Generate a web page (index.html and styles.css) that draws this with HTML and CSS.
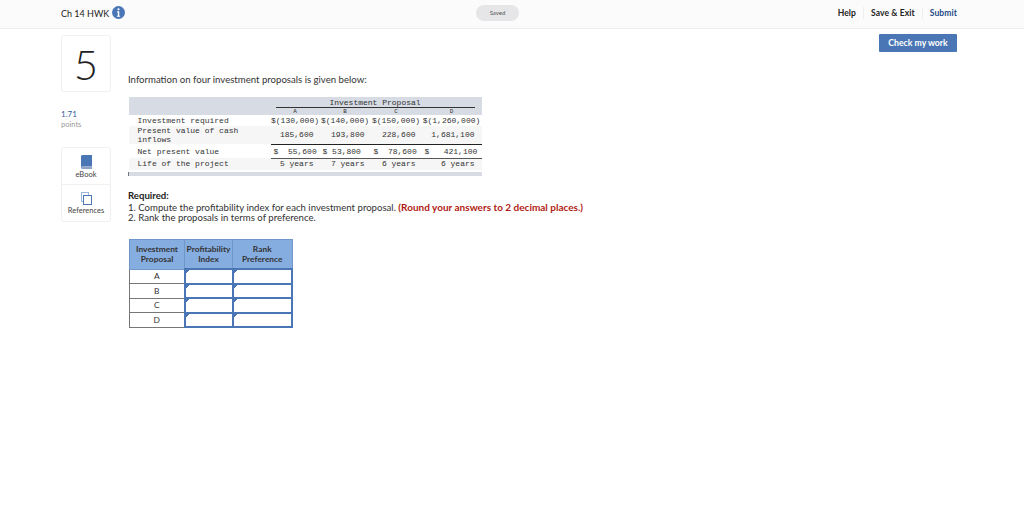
FILE: index.html
```html
<!DOCTYPE html>
<html lang="en">
<head>
    <meta charset="UTF-8">
    <title>Ch 14 HWK</title>
    <link rel="stylesheet" href="styles.css">
</head>
<body>
    <header class="topbar">
        <div class="topbar-left">
            <span class="hw-title">Ch 14 HWK</span>
            <svg class="info-icon" viewBox="0 0 12 12" width="13" height="13">
                <circle cx="6" cy="6" r="6" fill="#4a76b5"/>
                <circle cx="6" cy="3" r="1" fill="#fff"/>
                <path d="M4.7 4.9h2v4h.8v1H4.5v-1h.9v-3h-.7z" fill="#fff"/>
            </svg>
        </div>
        <span class="saved-pill">Saved</span>
        <nav class="topbar-links">
            <a class="help-link">Help</a>
            <a class="exit-link">Save &amp; Exit</a>
            <a class="submit-link">Submit</a>
        </nav>
    </header>

    <div class="page">
        <aside class="side">
            <div class="question-num">5</div>
            <div class="points-value">1.71</div>
            <div class="points-label">points</div>
            <div class="tools">
                <div class="tool tool-first">
                    <svg viewBox="0 0 11 14" width="11" height="14">
                        <path d="M0 1.5Q0 0 1.5 0H11V11.5H1.5Q0 11.5 0 13z" fill="#4a76b5"/>
                        <path d="M0 12.5Q0 11.5 1.5 11.5H11V14H1.5Q0 14 0 12.5z" fill="#8fa3c4"/>
                    </svg>
                    <span>eBook</span>
                </div>
                <div class="tool">
                    <svg viewBox="0 0 11 13" width="11" height="13" fill="#fff" stroke="#4a76b5">
                        <rect x="0.5" y="0.5" width="7" height="9" stroke="#9db5d8"/>
                        <rect x="2.5" y="3.5" width="8" height="9"/>
                    </svg>
                    <span>References</span>
                </div>
            </div>
        </aside>

        <main class="content">
            <div class="check-row"><button class="check-btn">Check my work</button></div>
            <p class="intro">Information on four investment proposals is given below:</p>

            <table class="data-table">
                <colgroup>
                    <col class="col-label">
                    <col class="col-a">
                    <col class="col-b">
                    <col class="col-c">
                    <col class="col-d">
                </colgroup>
                <tr class="shade head-row">
                    <td></td>
                    <td colspan="4" class="group-head"><span>Investment Proposal</span></td>
                </tr>
                <tr class="shade letters">
                    <td></td><td>A</td><td>B</td><td>C</td><td>D</td>
                </tr>
                <tr class="required-row">
                    <td>Investment required</td>
                    <td>$(130,000)</td><td>$(140,000)</td><td>$(150,000)</td><td>$(1,260,000)</td>
                </tr>
                <tr class="tint right-nums present-row">
                    <td>Present value of cash<br>inflows</td>
                    <td>185,600</td><td>193,800</td><td>228,600</td><td>1,681,100</td>
                </tr>
                <tr class="net">
                    <td>Net present value</td>
                    <td>$&nbsp;&nbsp;55,600</td><td>$&nbsp;53,800</td><td>$&nbsp;&nbsp;78,600</td><td>$&nbsp;&nbsp;&nbsp;421,100</td>
                </tr>
                <tr class="tint right-nums life">
                    <td>Life of the project</td>
                    <td>5 years</td><td>7 years</td><td>6 years</td><td>6 years</td>
                </tr>
                <tr class="gap"><td colspan="5"></td></tr>
                <tr class="shade foot"><td colspan="5"></td></tr>
            </table>

            <div class="required">
                <strong>Required:</strong><br>
                1. Compute the profitability index for each investment proposal. <b class="round-note">(Round your answers to 2 decimal places.)</b><br>
                2. Rank the proposals in terms of preference.
            </div>

            <table class="answer-table">
                <tr>
                    <th>Investment<br>Proposal</th>
                    <th>Profitability<br>Index</th>
                    <th>Rank<br>Preference</th>
                </tr>
                <tr><td>A</td><td class="cell-input"></td><td class="cell-input"></td></tr>
                <tr><td>B</td><td class="cell-input"></td><td class="cell-input"></td></tr>
                <tr><td>C</td><td class="cell-input"></td><td class="cell-input"></td></tr>
                <tr><td>D</td><td class="cell-input"></td><td class="cell-input"></td></tr>
            </table>
        </main>
    </div>
</body>
</html>
```

FILE: styles.css
```css
* {
    margin: 0;
    padding: 0;
    box-sizing: border-box;
}

body {
    font-family: 'Lato', 'Open Sans', sans-serif;
    background: #fff;
    color: #222;
    font-size: 10px;
}

.topbar {
    height: 29px;
    background: #fbfbfb;
    border-bottom: 1px solid #eee;
    display: grid;
    grid-template-columns: 415px auto 1fr;
    align-items: center;
    padding: 0 67px 3px 61px;
}

.topbar-left {
    display: flex;
    align-items: center;
    gap: 3px;
}

.hw-title {
    font-size: 9px;
    line-height: 13px;
    padding-top: 1px;
}

.saved-pill {
    width: 43px;
    height: 16px;
    border-radius: 8px;
    background: #e6e6e8;
    font-size: 6px;
    line-height: 16px;
    text-align: center;
    color: #555;
}

.topbar-links {
    display: flex;
    justify-content: flex-end;
    font-size: 8.5px;
    line-height: 11px;
    font-weight: 700;
    letter-spacing: 0.1px;
}

.topbar-links a {
    padding-top: 1px;
}

.topbar-links a + a {
    margin-left: 7px;
    padding-left: 7px;
    border-left: 1px solid #eee;
}

.submit-link {
    color: #234a86;
}

.page {
    display: flex;
    padding: 5px 67px 0 61px;
}

.side {
    width: 50px;
    flex: none;
    padding-top: 1px;
}

.question-num {
    height: 57px;
    border: 1px solid #f0f0f0;
    border-radius: 3px;
    font-size: 42px;
    font-weight: 300;
    line-height: 56px;
    text-align: center;
}

.points-value {
    margin-top: 17px;
    font-size: 8px;
    line-height: 11px;
    color: #315c9c;
}

.points-label {
    font-size: 7.5px;
    line-height: 9px;
    color: #999;
}

.tools {
    margin-top: 18px;
    height: 75px;
    border: 1px solid #f0f0f0;
    border-radius: 3px;
}

.tool {
    height: 37px;
    display: flex;
    flex-direction: column;
    align-items: center;
    gap: 1px;
    font-size: 7.5px;
    line-height: 9px;
    color: #444;
    padding-top: 7px;
}

.tool-first {
    border-bottom: 1px solid #f0f0f0;
}

.content {
    flex: 1;
    margin-left: 17px;
}

.check-row {
    display: flex;
    justify-content: flex-end;
}

.check-btn {
    width: 78px;
    height: 18px;
    padding-bottom: 2px;
    background: #4a76b5;
    color: #fff;
    border: none;
    border-radius: 1px;
    font-family: inherit;
    font-size: 8.7px;
    font-weight: 700;
}

.intro {
    margin-top: 21px;
    font-size: 9.6px;
    line-height: 14px;
    color: #333;
}

.data-table {
    margin-top: 10px;
    width: 353px;
    table-layout: fixed;
    border-collapse: collapse;
    font-family: 'Liberation Mono', monospace;
    font-size: 8px;
    color: #333;
}

.col-label {
    width: 142px;
}

.col-a {
    width: 49px;
}

.col-b,
.col-c {
    width: 51px;
}

.col-d {
    width: 60px;
}

.data-table td {
    line-height: 9px;
    text-align: center;
    white-space: nowrap;
    vertical-align: middle;
}

.data-table td:nth-child(1) {
    padding-left: 9px;
    text-align: left;
}

.shade {
    background: #d6dbe4;
}

.tint {
    background: #f6f6f6;
}

.head-row td {
    height: 11px;
}

.data-table .group-head {
    padding: 0 7px 0 5px;
    text-align: center;
}

.group-head span {
    display: block;
    height: 10px;
    border-bottom: 1px solid #333;
}

.letters td {
    height: 7px;
    font-size: 6px;
    line-height: 7px;
}

.required-row td {
    height: 11px;
}

.present-row td {
    height: 18px;
}

.right-nums td:not(:first-child) {
    text-align: right;
    padding-right: 6px;
}

.right-nums td:last-child {
    padding-right: 7px;
}

.net td {
    height: 14px;
}

.net td:not(:first-child) {
    text-align: left;
    padding-left: 3px;
    border-top: 1px solid #222;
    border-bottom: 1px solid #555;
}

.life td {
    height: 12px;
    padding-bottom: 2px;
}

.gap td {
    height: 2px;
}

.foot td {
    height: 4px;
    border-left: 1px solid #777;
}

.required {
    margin-top: 15px;
    font-size: 9.6px;
    line-height: 10.5px;
    color: #333;
}

.required strong {
    color: #222;
}

.round-note {
    color: #b01c14;
    font-size: 10px;
}

.answer-table {
    margin-top: 15px;
    margin-left: 1px;
    width: 164px;
    table-layout: fixed;
    border-collapse: collapse;
    font-size: 8.4px;
    text-align: center;
}

.answer-table th {
    height: 30px;
    background: #85ade0;
    border: 1px solid #6f97c9;
    line-height: 10px;
    color: #333;
}

.answer-table td {
    height: 14.5px;
    border: 1px solid #777;
    color: #333;
}

.answer-table th:first-child {
    width: 55px;
}

.answer-table th:nth-child(2) {
    width: 48px;
}

.answer-table .cell-input {
    border: 2px solid #4a76b5;
    background: linear-gradient(135deg, #4a76b5 2.5px, transparent 2.5px) no-repeat;
}
```
